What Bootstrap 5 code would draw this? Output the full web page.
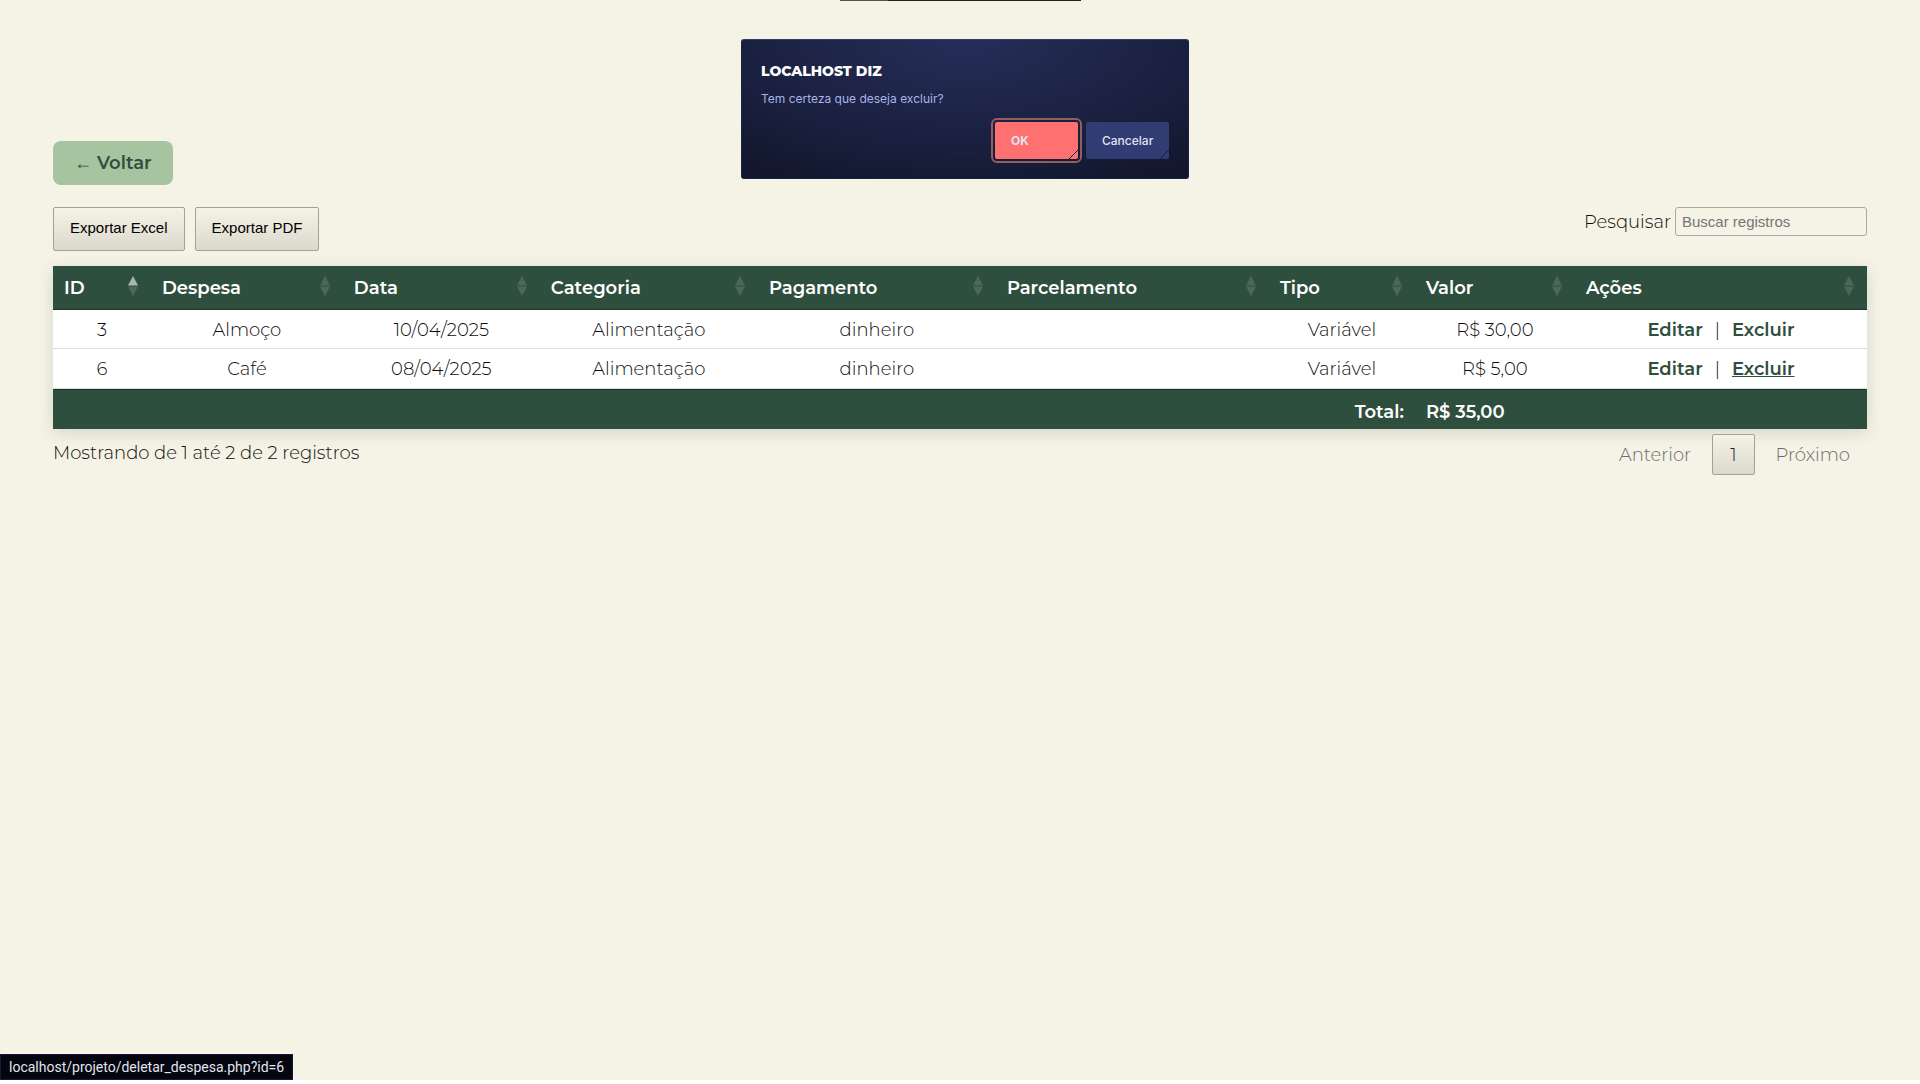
<!DOCTYPE html>
<html lang="pt-BR">
<head>
<meta charset="utf-8">
<meta name="viewport" content="width=device-width, initial-scale=1">
<title>Despesas</title>
<link href="https://cdn.jsdelivr.net/npm/bootstrap@5.3.0/dist/css/bootstrap.min.css" rel="stylesheet">
<style>
  :root { --green: #2f4f3e; --cream: #f5f2e6; }
  body { background: var(--cream); color: #0c0c0c; font-family: Montserrat, Inter, "Open Sans", sans-serif; font-size: 18px; font-weight: 300; line-height: 24px; }
  .page { padding: 141px 53px 0; }
  .btn-back { background: #a7c4a0; color: var(--green); border: 0; border-radius: 8px; padding: 10px 21px; font-size: 18px; font-weight: 600; line-height: 24px; }
  .btn-back:hover { background: #98b891; color: var(--green); }
  .arrow { font-family: "Liberation Sans", Arial, sans-serif; font-weight: 400; }
  .toolbar { margin: 22px 0 15px; }
  .export-group { gap: 10px; }
  .btn-export, .page-current { border: 1px solid #a3a195; border-radius: 2px; background: linear-gradient(#f5f2e6, #dbd8cd); }
  .btn-export { font: 400 15px/22px "Liberation Sans", Arial, sans-serif; padding: 9px 16px 11px; color: #000; }
  .search-box { width: 192px; height: 29px; border: 1px solid #aaa; border-radius: 3px; background: transparent; padding: 5px 6px; font: 400 15px/17px "Liberation Sans", Arial, sans-serif; }
  .search-box::placeholder { color: #757575; opacity: 1; }
  .expenses { table-layout: fixed; width: 100%; background: #fff; box-shadow: 0 4px 16px rgba(0,0,0,.12); border-collapse: separate; border-spacing: 0; }
  .expenses th, .expenses tfoot td { background: var(--green); color: #fff; font-weight: 600; }
  .expenses th { border-bottom: 1px solid #1f3529; padding: 10px 13px 9px 11px; }
  .expenses tbody td { text-align: center; padding: 8px 10px 6px; border-bottom: 1px solid #ddd; }
  .expenses tbody tr:last-child td { padding-bottom: 7px; }
  .expenses tfoot td { border-top: 1px solid #1f3529; padding: 10px 11px 5px; }
  .expenses a { color: var(--green); font-weight: 600; text-decoration: none; }
  .expenses a:hover, .expenses a.hovered { text-decoration: underline; }
  .sort-icon { width: 10px; height: 20px; fill: #fff; fill-opacity: .14; flex: none; }
  .sort-icon.asc .up { fill-opacity: .6; }
  .pager { padding-top: 5px; }
  .pager a { color: #6c6c6c; text-decoration: none; padding: 9px 17px 8px; }
  .pager .page-current { color: #1c1c1c; margin: 0 4px; padding: 8px 17px 7px; }
  .dialog-box { top: 39px; left: calc(50% - 219px); width: 448px; height: 140px; padding: 20px 19px 19px; border-radius: 3px; border: 1px solid #1b2244; border-top-color: #2e3a6e; background: radial-gradient(ellipse 90% 130% at 50% 0, #252e59 0%, #191f3d 60%, #101427 100%); font-family: Inter, sans-serif; }
  .dialog-title { font: 800 14px/22px Montserrat, Inter, sans-serif; color: #fff; margin: 0; }
  .dialog-text { font-size: 12px; line-height: 20px; font-weight: 400; color: #a9b3e6; margin: 7px 0 0; }
  .dialog-btn { width: 83px; height: 37px; border: 0; border-radius: 2px; padding: 0 16px; font-size: 12px; font-weight: 500; text-align: left; color: #e0e3f3; background: linear-gradient(135deg, transparent 0 6px, #161b36 6px 7px, transparent 7px) right bottom / 9px 9px no-repeat #313c72; }
  .dialog-ok { background-color: #ff7070; font-weight: 700; outline: 2px solid #935d61; outline-offset: 2px; }
  .top-bar { top: 0; left: calc(50% - 120px); width: 241px; height: 1px; background: linear-gradient(90deg, #555052 48px, #222024 48px); }
  .status-bar { left: 0; bottom: 4px; height: 26px; padding: 0 8px; border: 1px solid #151a38; background: #04050f; color: #e2e4ee; font: 400 14px/24px Roboto, sans-serif; }
  .bottom-edge { height: 4px; background: #fff; }
</style>
</head>
<body>
<svg width="0" height="0" class="position-absolute"><symbol id="sort-up" viewBox="0 0 10 20"><path d="M5 0l5 9.500H0z"/></symbol><symbol id="sort-down" viewBox="0 0 10 20"><path d="M0 10.500h10L5 20z"/></symbol></svg>
<main class="page">
  <a href="#" class="btn btn-back"><span class="arrow">←</span> Voltar</a>
  <div class="toolbar d-flex justify-content-between align-items-start">
    <div class="export-group d-flex">
      <button type="button" class="btn-export">Exportar Excel</button>
      <button type="button" class="btn-export">Exportar PDF</button>
    </div>
    <div class="d-flex align-items-center gap-1">
      <label for="search">Pesquisar</label>
      <input id="search" type="search" class="search-box" placeholder="Buscar registros">
    </div>
  </div>
  <table class="expenses">
    <colgroup><col style="width:5.4%"><col style="width:10.58%"><col style="width:10.86%"><col style="width:12.02%"><col style="width:13.12%"><col style="width:15.05%"><col style="width:8.05%"><col style="width:8.82%"><col style="width:16.1%"></colgroup>
    <thead>
      <tr>
        <th><div class="d-flex justify-content-between">ID<svg class="sort-icon asc"><use class="up" href="#sort-up"/><use href="#sort-down"/></svg></div></th>
        <th><div class="d-flex justify-content-between">Despesa<svg class="sort-icon"><use href="#sort-up"/><use href="#sort-down"/></svg></div></th>
        <th><div class="d-flex justify-content-between">Data<svg class="sort-icon"><use href="#sort-up"/><use href="#sort-down"/></svg></div></th>
        <th><div class="d-flex justify-content-between">Categoria<svg class="sort-icon"><use href="#sort-up"/><use href="#sort-down"/></svg></div></th>
        <th><div class="d-flex justify-content-between">Pagamento<svg class="sort-icon"><use href="#sort-up"/><use href="#sort-down"/></svg></div></th>
        <th><div class="d-flex justify-content-between">Parcelamento<svg class="sort-icon"><use href="#sort-up"/><use href="#sort-down"/></svg></div></th>
        <th><div class="d-flex justify-content-between">Tipo<svg class="sort-icon"><use href="#sort-up"/><use href="#sort-down"/></svg></div></th>
        <th><div class="d-flex justify-content-between">Valor<svg class="sort-icon"><use href="#sort-up"/><use href="#sort-down"/></svg></div></th>
        <th><div class="d-flex justify-content-between">Ações<svg class="sort-icon"><use href="#sort-up"/><use href="#sort-down"/></svg></div></th>
      </tr>
    </thead>
    <tbody>
      <tr><td>3</td><td>Almoço</td><td>10/04/2025</td><td>Alimentação</td><td>dinheiro</td><td></td><td>Variável</td><td>R$ 30,00</td><td><a href="#">Editar</a><span class="mx-2 px-1">|</span><a href="#">Excluir</a></td></tr>
      <tr><td>6</td><td>Café</td><td>08/04/2025</td><td>Alimentação</td><td>dinheiro</td><td></td><td>Variável</td><td>R$ 5,00</td><td><a href="#">Editar</a><span class="mx-2 px-1">|</span><a href="#" class="hovered">Excluir</a></td></tr>
    </tbody>
    <tfoot><tr><td colspan="7" class="text-end">Total:</td><td>R$ 35,00</td><td></td></tr></tfoot>
  </table>
  <div class="d-flex justify-content-between align-items-start">
    <div class="pt-2 mt-1">Mostrando de 1 até 2 de 2 registros</div>
    <nav class="pager d-flex" aria-label="Paginação">
      <a href="#">Anterior</a><a href="#" class="page-current">1</a><a href="#">Próximo</a>
    </nav>
  </div>
</main>

<div class="top-bar position-absolute"></div>
<div class="dialog-box position-absolute d-flex flex-column" role="dialog" aria-labelledby="dialog-title">
  <h1 id="dialog-title" class="dialog-title">LOCALHOST DIZ</h1>
  <p class="dialog-text">Tem certeza que deseja excluir?</p>
  <div class="d-flex justify-content-end gap-2 mt-auto">
    <button type="button" class="dialog-btn dialog-ok">OK</button>
    <button type="button" class="dialog-btn">Cancelar</button>
  </div>
</div>
<div class="status-bar position-fixed">localhost/projeto/deletar_despesa.php?id=6</div>
<div class="bottom-edge fixed-bottom"></div>
<script src="https://cdn.jsdelivr.net/npm/bootstrap@5.3.0/dist/js/bootstrap.bundle.min.js"></script>
</body>
</html>
